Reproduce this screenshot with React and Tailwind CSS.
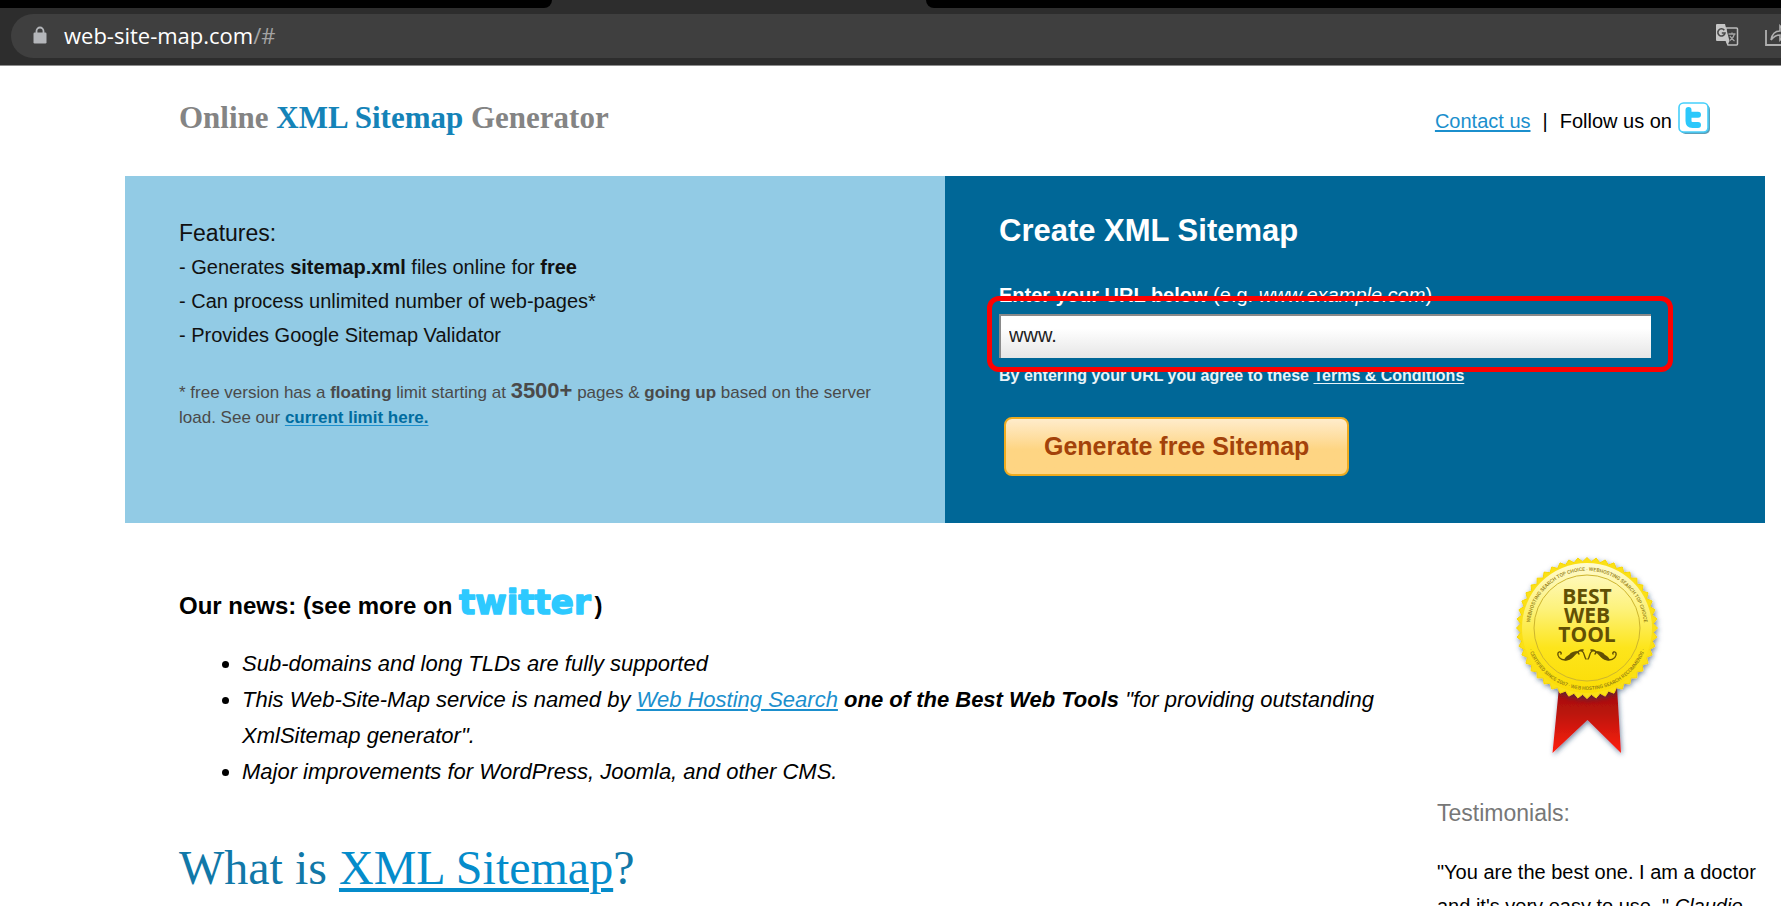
import { useState } from "react";

const linkStyle = "text-[#1b8fcd] underline underline-offset-2";

function LockIcon() {
  return (
    <svg width="14" height="18" viewBox="0 0 14 18" aria-hidden="true">
      <path d="M3.5 8V5a3.5 3.5 0 0 1 7 0v3" fill="none" stroke="#b4b6ba" strokeWidth="1.8" />
      <rect x="0.5" y="6.5" width="13" height="11" rx="1.2" fill="#b4b6ba" />
    </svg>
  );
}

function TranslateIcon() {
  return (
    <svg width="24" height="24" viewBox="0 0 24 24" aria-hidden="true">
      <path d="M11 5h10.500a1 1 0 0 1 1 1v15a1 1 0 0 1-1 1h-8.500l-2-5z" fill="none" stroke="#bdbdbd" strokeWidth="1.5" />
      <path d="M13.500 11h7M17 9.500V11M19.500 11c-.8 3-2.500 5-4.500 6.500M15 13c1 2 2.500 3.500 4.500 5" fill="none" stroke="#a5a5a5" strokeWidth="1.3" />
      <path d="M2 1h8l4.500 17H2a1 1 0 0 1-1-1V2a1 1 0 0 1 1-1z" fill="#c6c6c6" />
      <path d="M11 18h3.500l-2 4z" fill="#c6c6c6" />
      <path d="M9.300 7.200A3.600 3.600 0 1 0 10 10H6.800" fill="none" stroke="#4a4a4a" strokeWidth="1.6" />
    </svg>
  );
}

function ShareIcon() {
  return (
    <svg width="24" height="24" viewBox="0 0 24 24" fill="none" stroke="#b0b0b0" strokeWidth="1.8" aria-hidden="true">
      <path d="M1 7v15h20v-6" />
      <path d="M6 17c1-6 4-9 9-9V3l7 7-7 7v-5c-4 0-6 1-9 5z" strokeWidth="1.6" />
    </svg>
  );
}

function TwitterIcon() {
  return (
    <svg width="33" height="33" viewBox="0 0 33 33" aria-hidden="true">
      <rect x="2.5" y="2.5" width="29.500" height="29.500" rx="5" fill="#5d9fb8" />
      <rect x="1" y="1" width="29" height="29" rx="4.5" fill="#fff" stroke="#45cffb" strokeWidth="1.6" />
      <path
        d="M10.500 8v11q0 4 4 4h5.500M11 12.800h9"
        fill="none"
        stroke="#2cc8fb"
        strokeWidth="6"
        strokeLinecap="round"
        strokeLinejoin="round"
      />
    </svg>
  );
}

function TwitterWordmark() {
  return (
    <svg width="138" height="40" viewBox="0 0 138 40" className="overflow-visible" role="img" aria-label="twitter">
      <text
        x="3"
        y="28"
        fontFamily="'DejaVu Sans', sans-serif"
        fontWeight="700"
        fontSize="34"
        fill="#2dc9ff"
        stroke="#2dc9ff"
        strokeWidth="1.5"
        strokeLinejoin="round"
        strokeLinecap="round"
      >
        twitter
      </text>
    </svg>
  );
}

// zig-zag rim of the medal
const rim = Array.from({ length: 96 }, (_, i) => {
  const angle = (i / 96) * Math.PI * 2;
  const r = i % 2 ? 66.5 : 70.5;
  return `${(87 + r * Math.cos(angle)).toFixed(2)},${(87 + r * Math.sin(angle)).toFixed(2)}`;
}).join(" ");

function Badge() {
  return (
    <svg width="174" height="226" viewBox="0 0 174 226" role="img" aria-label="Best web tool award">
      <defs>
        <linearGradient id="gold" x1="0" y1="0" x2="0" y2="1">
          <stop offset="0" stopColor="#fffbd0" />
          <stop offset="0.35" stopColor="#fdf27c" />
          <stop offset="0.65" stopColor="#fde51c" />
          <stop offset="1" stopColor="#fbdc05" />
        </linearGradient>
        <linearGradient id="ribbon" x1="0" y1="0" x2="0" y2="1">
          <stop offset="0" stopColor="#a00c05" />
          <stop offset="0.4" stopColor="#bb140a" />
          <stop offset="1" stopColor="#ff2008" />
        </linearGradient>
        <filter id="shade" x="-20%" y="-20%" width="140%" height="140%">
          <feDropShadow dx="1" dy="2" stdDeviation="2.500" floodColor="#1c3a66" floodOpacity="0.6" />
        </filter>
        <path id="arcTop" d="M30 93a57.300 57.300 0 1 1 114 0" />
        <path id="arcBottom" d="M26 98a62 62 0 0 0 122 0" />
      </defs>
      <g filter="url(#shade)">
        <path d="M59 146h58l4 66-33.500-33L52.500 212z" fill="url(#ribbon)" />
      </g>
      <g filter="url(#shade)">
        <polygon points={rim} fill="#fbe017" stroke="#f6d800" strokeWidth="1" strokeLinejoin="round" />
      </g>
      <circle cx="87" cy="87" r="65" fill="url(#gold)" />
      <circle cx="87" cy="87" r="53" fill="none" stroke="#cdb52e" strokeWidth="1" />
      <g fontFamily="Roboto, sans-serif" fontSize="5" fontWeight="500" fill="#957f14">
        <text>
          <textPath href="#arcTop" startOffset="50%" textAnchor="middle">
            WEBHOSTING SEARCH TOP CHOICE · WEBHOSTING SEARCH TOP CHOICE
          </textPath>
        </text>
        <text>
          <textPath href="#arcBottom" startOffset="50%" textAnchor="middle">
            · CERTIFIED SINCE 2007 · WEB HOSTING SEARCH RECOMMENDS ·
          </textPath>
        </text>
      </g>
      <g fontFamily="'Open Sans', sans-serif" fontWeight="700" fontSize="21" fill="#625004" textAnchor="middle">
        <text x="87" y="63">BEST</text>
        <text x="87" y="82">WEB</text>
        <text x="87" y="101">TOOL</text>
      </g>
      <g fill="none" stroke="#625004" strokeWidth="1.400" strokeLinecap="round">
        <path d="M86 118c-2-2-1-6-4-8-3-1-5 1-3 3M83 109c-7-2-9 11-18 10-5 0-8-4-7-7 1-2 4-1 3 1" />
        <path d="M88 118c2-2 1-6 4-8 3-1 5 1 3 3M91 109c7-2 9 11 18 10 5 0 8-4 7-7-1-2-4-1-3 1" />
      </g>
      <g fill="#625004">
        <path d="M64 119c2-4 5-6 11-7-1 4-5 8-11 7zM69 114c2-3 5-4 9-4-2 3-5 4-9 4z" />
        <path d="M110 119c-2-4-5-6-11-7 1 4 5 8 11 7zM105 114c-2-3-5-4-9-4 2 3 5 4 9 4z" />
      </g>
    </svg>
  );
}

function BrowserBar() {
  return (
    <div className="bg-[#2d2d2d] border-b border-[#8d8d8d]">
      <div className="flex h-2">
        <div className="w-[31%] bg-black rounded-br-lg"></div>
        <div className="w-[21%]"></div>
        <div className="flex-1 bg-black rounded-bl-lg"></div>
      </div>
      <div className="pt-[6px] pb-[7px] pl-[11px]">
        <div className="h-11 bg-[#3f3f3f] rounded-l-full flex items-center pl-[22px] pb-[2px] overflow-hidden">
          <LockIcon />
          <div className="ml-[17px] flex-1 text-[22px] leading-7 text-white font-['Open_Sans',sans-serif]">
            web-site-map.com<span className="text-[#a3a3a3]">/#</span>
          </div>
          <button aria-label="Translate">
            <TranslateIcon />
          </button>
          <button aria-label="Share" className="ml-[26px] -mr-2">
            <ShareIcon />
          </button>
        </div>
      </div>
    </div>
  );
}

function Header() {
  return (
    <header className="h-[110px] flex items-center justify-between px-[54px]">
      <div className="mb-[6px] font-['Liberation_Serif',serif] font-bold text-[31px] leading-9 text-[#848484]">
        Online <span className="text-[#1483b8]">XML Sitemap</span> Generator
      </div>
      <div className="flex items-center text-xl">
        <a href="#contact" className={linkStyle}>Contact us</a>
        <span className="mx-3">|</span>
        <span>Follow us on</span>
        <a href="#twitter" aria-label="Twitter" className="ml-[6px] mb-[6px]">
          <TwitterIcon />
        </a>
      </div>
    </header>
  );
}

function Features() {
  return (
    <div className="bg-[#92cbe5] text-[#111] px-[54px] pt-10">
      <div className="text-xl leading-[34px]">
        <p className="text-[23px] leading-[34px]">Features:</p>
        <p>- Generates <b>sitemap.xml</b> files online for <b>free</b></p>
        <p>- Can process unlimited number of web-pages*</p>
        <p>- Provides Google Sitemap Validator</p>
      </div>
      <p className="mt-7 text-[17px] leading-[25px] text-[#4a4a4a]">
        * free version has a <b>floating</b> limit starting at{" "}
        <b className="text-[22px] leading-none">3500+</b> pages &amp; <b>going up</b> based on the server
        load. See our{" "}
        <a href="#limit" className="font-bold text-[#006c9f] underline underline-offset-2 decoration-[#1b8fcd]">
          current limit here.
        </a>
      </p>
    </div>
  );
}

function CreateForm() {
  const [url, setUrl] = useState("www.");

  return (
    <form
      className="bg-[#006797] text-white pl-[54px] pr-[114px] pt-9"
      onSubmit={(e) => e.preventDefault()}
    >
      <h2 className="text-[31px] leading-[38px] font-bold">Create XML Sitemap</h2>
      <label htmlFor="url" className="block mt-[30px] text-xl leading-[30px]">
        <b>Enter your URL below</b> (e.g. <i>www.example.com</i>)
      </label>
      <div className="relative mt-1">
        <input
          id="url"
          type="text"
          value={url}
          onChange={(e) => setUrl(e.target.value)}
          className="block w-full h-11 px-2 pb-1 text-xl text-[#222] bg-linear-to-b from-white from-30% to-[#e6e6e6] border-t-2 border-l-2 border-[#8a8a8a] outline-none"
        />
        {/* highlight around the url box */}
        <div className="absolute -top-[18px] -bottom-[14px] -left-3 -right-[22px] border-[5px] border-[#fd0100] rounded-xl pointer-events-none"></div>
      </div>
      <p className="mt-[6px] text-base leading-6 font-bold text-[#e8f3f8]">
        By entering your URL you agree to these{" "}
        <a href="#terms" className="underline underline-offset-2">Terms &amp; Conditions</a>
      </p>
      <button
        type="submit"
        className="mt-[29px] ml-[5px] px-[38px] h-[59px] text-[25px] font-bold text-[#a3420a] rounded-lg border-2 border-[#eeab1f] bg-linear-to-b from-[#ffeccb] to-[#fed583] to-55%"
      >
        Generate free Sitemap
      </button>
    </form>
  );
}

function News() {
  return (
    <main className="flex-1 pl-[54px] pr-[30px] pt-[63px]">
      <h3 className="flex items-center text-2xl leading-10 font-bold">
        Our news: (see more on
        <a href="#twitter" className="ml-1"><TwitterWordmark /></a>)
      </h3>
      <ul className="mt-5 pl-[63px] list-disc text-[22px] leading-9 italic">
        <li>Sub-domains and long TLDs are fully supported</li>
        <li>
          This Web-Site-Map service is named by{" "}
          <a href="#hosting" className={linkStyle}>Web Hosting Search</a>{" "}
          <b>one of the Best Web Tools</b> "for providing outstanding XmlSitemap generator".
        </li>
        <li>Major improvements for WordPress, Joomla, and other CMS.</li>
      </ul>
      <h1 className="mt-[50px] text-5xl leading-14 text-[#1178a8] font-['Liberation_Serif',serif]">
        What is{" "}
        <a href="#what" className="text-[#058ccb] underline underline-offset-4 decoration-4">XML Sitemap</a>?
      </h1>
    </main>
  );
}

function Sidebar() {
  return (
    <aside className="w-[328px] shrink-0 pt-[18px]">
      <div className="flex justify-center pr-7">
        <Badge />
      </div>
      <h4 className="mt-[30px] text-[23px] leading-8 text-[#777]">Testimonials:</h4>
      <p className="mt-[26px] text-xl leading-[34px]">
        "You are the best one. I am a doctor and it's very easy to use. " <i>Claudio</i>
      </p>
    </aside>
  );
}

export default function App() {
  return (
    <div className="h-screen overflow-hidden bg-white text-black font-['Liberation_Sans',Arial,sans-serif]">
      <BrowserBar />
      <div className="ml-[125px] mr-4">
        <Header />
        <section className="grid grid-cols-2 min-h-[347px]">
          <Features />
          <CreateForm />
        </section>
        <div className="flex">
          <News />
          <Sidebar />
        </div>
      </div>
    </div>
  );
}
